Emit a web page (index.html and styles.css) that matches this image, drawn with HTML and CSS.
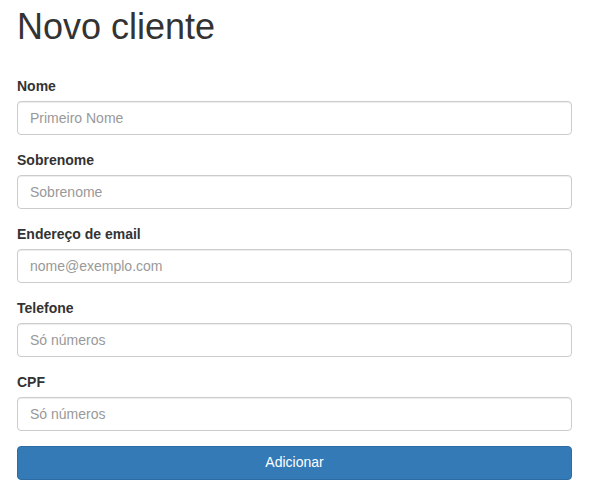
FILE: index.html
```html
<!DOCTYPE html>
<html lang="pt-BR">
<head>
<meta charset="utf-8">
<title>Novo cliente</title>
<link rel="stylesheet" href="styles.css">
</head>
<body>
<div class="page">
  <h1 class="title">Novo cliente</h1>
  <form class="form">
    <div class="form-group">
      <label class="label" for="nome">Nome</label>
      <input class="input" id="nome" type="text" placeholder="Primeiro Nome">
    </div>
    <div class="form-group">
      <label class="label" for="sobrenome">Sobrenome</label>
      <input class="input" id="sobrenome" type="text" placeholder="Sobrenome">
    </div>
    <div class="form-group">
      <label class="label" for="email">Endereço de email</label>
      <input class="input" id="email" type="email" placeholder="nome@exemplo.com">
    </div>
    <div class="form-group">
      <label class="label" for="telefone">Telefone</label>
      <input class="input" id="telefone" type="text" placeholder="Só números">
    </div>
    <div class="form-group">
      <label class="label" for="cpf">CPF</label>
      <input class="input" id="cpf" type="text" placeholder="Só números">
    </div>
    <button class="btn" type="button">Adicionar</button>
  </form>
</div>
</body>
</html>
```

FILE: styles.css
```css
* { box-sizing: border-box; }
html, body { margin: 0; padding: 0; background: #fff; }
body {
  font-family: "Liberation Sans", Arial, sans-serif;
  font-size: 14px;
  line-height: 1.42857;
  color: #333;
}
.page {
  width: 572px;
  padding: 7px 0 0 17px;
}
.title {
  margin: 0 0 29px;
  font-size: 36px;
  font-weight: 500;
  line-height: 1.1;
  color: #333;
}
.form { display: flex; flex-direction: column; }
.form-group {
  display: flex;
  flex-direction: column;
  margin-bottom: 15px;
}
.label {
  font-weight: 700;
  margin-bottom: 5px;
  line-height: 20px;
}
.input {
  display: block;
  width: 100%;
  height: 34px;
  padding: 6px 12px;
  font-family: inherit;
  font-size: 14px;
  line-height: 1.42857;
  color: #555;
  background: #fff;
  border: 1px solid #ccc;
  border-radius: 4px;
  box-shadow: inset 0 1px 1px rgba(0,0,0,.075);
  outline: none;
}
.input::placeholder { color: #999; opacity: 1; }
.btn {
  display: block;
  width: 100%;
  height: 34px;
  padding: 6px 12px;
  font-family: inherit;
  font-size: 14px;
  line-height: 1.42857;
  color: #fff;
  background: #337ab7;
  border: 1px solid #2e6da4;
  border-radius: 4px;
  cursor: pointer;
}
```
